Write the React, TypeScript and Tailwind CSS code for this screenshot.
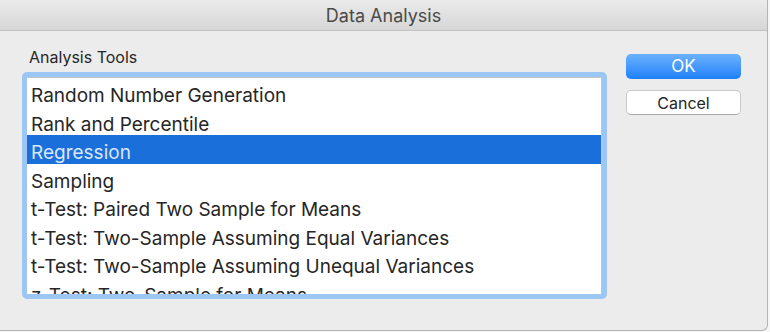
const tools = [
  "Random Number Generation",
  "Rank and Percentile",
  "Regression",
  "Sampling",
  "t-Test: Paired Two Sample for Means",
  "t-Test: Two-Sample Assuming Equal Variances",
  "t-Test: Two-Sample Assuming Unequal Variances",
  "z-Test: Two-Sample for Means",
];

const App = () => {
  return (
    <div className="w-[770px] h-[332px] bg-[#f6f6f6] font-['Inter',sans-serif]">
      <div className="w-[768px] h-[331px] flex flex-col bg-[#ececec] border-r border-b border-[#b4b4b4] rounded-br-[6px] overflow-hidden">
        <div className="h-[31px] shrink-0 flex items-center justify-center bg-gradient-to-b from-[#ebebeb] to-[#d6d6d6] border-b border-[#c2c2c2] text-[18px] text-[#4a4a4a]">
          Data Analysis
        </div>
        <div className="flex pl-[22px] pt-[13px]">
          <div className="flex flex-col">
            <div className="pl-[7px] text-[16px] text-[#262626] h-[27px] leading-[27px]">
              Analysis Tools
            </div>
            <div className="mt-[1px] w-[585px] h-[227px] p-[5px] bg-[#9cc6f4] rounded-[5px]">
              <div className="h-full bg-white border-t border-r border-[#c4c4c4] overflow-hidden">
                {tools.map((t, i) => (
                  <div
                    key={t}
                    className={
                      i === 2
                        ? "h-[28.5px] pt-[6px] leading-[23px] pl-[4px] text-[19px] bg-[#1b6fda] text-[#d9e7fa] whitespace-nowrap"
                        : "h-[28.5px] pt-[6px] leading-[23px] pl-[4px] text-[19px] text-[#262626] whitespace-nowrap"
                    }
                  >
                    {t}
                  </div>
                ))}
              </div>
            </div>
          </div>
          <div className="ml-[19px] pt-[10px] flex flex-col gap-[11px]">
            <button className="w-[115px] h-[25px] rounded-[5px] bg-gradient-to-b from-[#6ab1fb] to-[#1a80fb] text-white text-[17px] leading-none">
              OK
            </button>
            <button className="w-[115px] h-[25px] rounded-[5px] bg-white border border-[#c8c8c8] border-b-[#a8a8a8] text-[#262626] text-[16px] leading-none">
              Cancel
            </button>
          </div>
        </div>
      </div>
    </div>
  );
};

export default App;
